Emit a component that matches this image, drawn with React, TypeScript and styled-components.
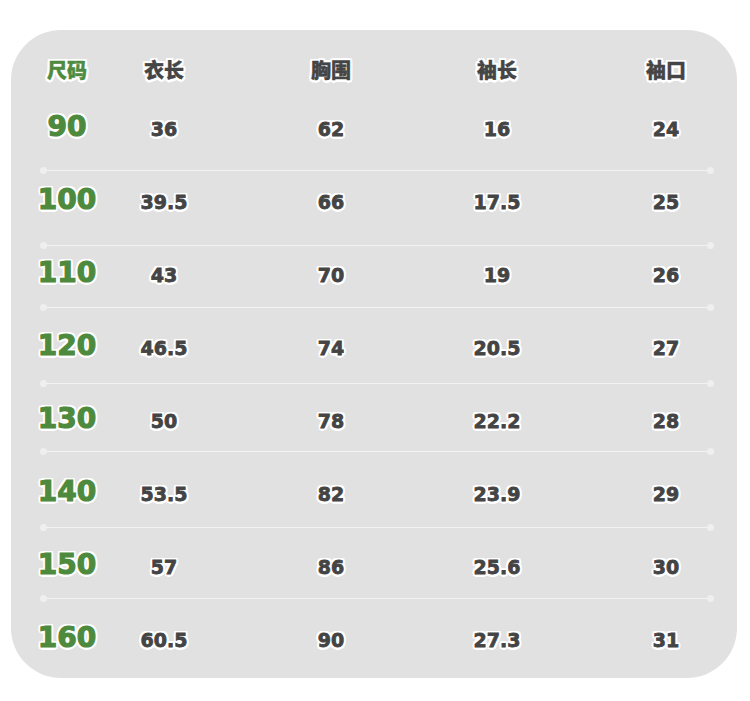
import React from 'react';
import styled, { createGlobalStyle } from 'styled-components';

const GlobalStyle = createGlobalStyle`
  html, body {
    margin: 0;
    padding: 0;
    background: #ffffff;
  }
`;

const outline = `
  text-shadow:
    -2px -2px 0 #fff, 2px -2px 0 #fff, -2px 2px 0 #fff, 2px 2px 0 #fff,
    0 -2.5px 0 #fff, 0 2.5px 0 #fff, -2.5px 0 0 #fff, 2.5px 0 0 #fff;
`;

const Page = styled.div`
  width: 750px;
  height: 701px;
  padding: 30px 13px 0 11px;
  box-sizing: border-box;
`;

const Card = styled.div`
  width: 726px;
  height: 648px;
  background: #e1e1e1;
  border-radius: 50px;
  display: flex;
  flex-direction: column;
  overflow: hidden;
`;

// size column, then four value columns centred on 164 / 331 / 497 / 666
const Row = styled.div<{ $height: number; $top: number }>`
  display: grid;
  grid-template-columns: 113px 80px 87px 80px 86px 80px 89px 80px;
  height: ${(p) => p.$height}px;
  padding-top: ${(p) => p.$top}px;
  box-sizing: border-box;
  flex-shrink: 0;
  & > *:nth-child(1) { margin-left: -1px; }
  & > *:nth-child(2) { grid-column: 2; }
  & > *:nth-child(3) { grid-column: 4; }
  & > *:nth-child(4) { grid-column: 6; }
  & > *:nth-child(5) { grid-column: 8; }
`;

const HeadCell = styled.div<{ $green?: boolean }>`
  font-family: "Noto Sans CJK SC", "DejaVu Sans", sans-serif;
  font-weight: 900;
  font-size: 20px;
  line-height: 30px;
  text-align: center;
  color: ${(p) => (p.$green ? '#4f8b3f' : '#454545')};
  -webkit-text-stroke: 0.4px ${(p) => (p.$green ? '#4f8b3f' : '#454545')};
  ${outline}
`;

const SizeCell = styled.div`
  font-family: "DejaVu Sans", "Liberation Sans", sans-serif;
  font-weight: 700;
  font-size: 28px;
  line-height: 30px;
  text-align: center;
  color: #4e8a3e;
  -webkit-text-stroke: 1.2px #4e8a3e;
  ${outline}
`;

const ValueCell = styled.div`
  font-family: "DejaVu Sans", "Liberation Sans", sans-serif;
  font-weight: 700;
  font-size: 19px;
  line-height: 30px;
  margin-top: 2px;
  text-align: center;
  color: #444444;
  -webkit-text-stroke: 0.8px #444444;
  ${outline}
`;

const Divider = styled.div`
  position: relative;
  height: 1px;
  margin: 0 26px 0 32px;
  background: #f3f3f3;
  flex-shrink: 0;

  &::before,
  &::after {
    content: '';
    position: absolute;
    top: -3px;
    width: 7px;
    height: 7px;
    border-radius: 50%;
    background: #efefef;
  }
  &::before { left: -3px; }
  &::after { right: -3px; }
`;

const rows = [
  { size: '90', values: ['36', '62', '16', '24'], height: 70, top: 12 },
  { size: '100', values: ['39.5', '66', '17.5', '25'], height: 74, top: 14 },
  { size: '110', values: ['43', '70', '19', '26'], height: 61, top: 12 },
  { size: '120', values: ['46.5', '74', '20.5', '27'], height: 75, top: 23 },
  { size: '130', values: ['50', '78', '22.2', '28'], height: 67, top: 20 },
  { size: '140', values: ['53.5', '82', '23.9', '29'], height: 75, top: 25 },
  { size: '150', values: ['57', '86', '25.6', '30'], height: 70, top: 22 },
  { size: '160', values: ['60.5', '90', '27.3', '31'], height: 80, top: 24 },
];

const columns = ['衣长', '胸围', '袖长', '袖口'];

const App = () => {
  return (
    <Page>
      <GlobalStyle />
      <Card>
        <Row $height={70} $top={25}>
          <HeadCell $green>尺码</HeadCell>
          {columns.map((c) => (
            <HeadCell key={c}>{c}</HeadCell>
          ))}
        </Row>
        {rows.map((r, i) => (
          <React.Fragment key={r.size}>
            {i > 0 && <Divider />}
            <Row $height={r.height} $top={r.top}>
              <SizeCell>{r.size}</SizeCell>
              {r.values.map((v, j) => (
                <ValueCell key={j}>{v}</ValueCell>
              ))}
            </Row>
          </React.Fragment>
        ))}
      </Card>
    </Page>
  );
};

export default App;
